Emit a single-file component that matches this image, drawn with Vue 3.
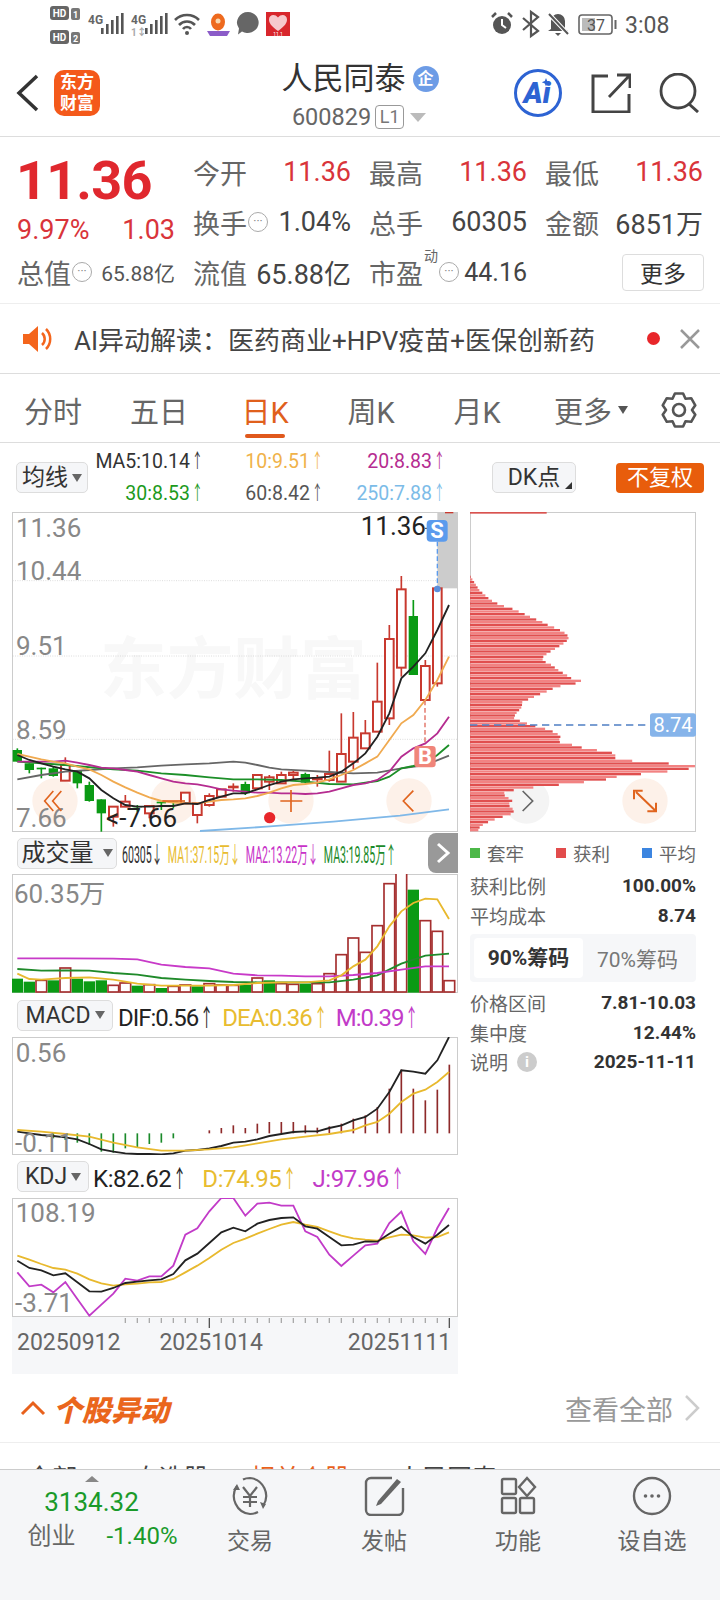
<template>
  <div class="page">
    <!-- status bar -->
    <svg class="status" viewBox="0 0 720 60">
      <g v-for="(n, i) in ['1', '2']" :key="n">
        <rect x="50" :y="6 + i * 24" width="19" height="14" rx="3" fill="#666" />
        <text x="59.5" :y="17 + i * 24" class="st-hd">HD</text>
        <rect x="71" :y="8 + i * 24" width="9" height="12" rx="2" fill="#777" />
        <text x="75.5" :y="18 + i * 24" class="st-n">{{ n }}</text>
      </g>
      <text x="88" y="24" class="st-g">4G</text>
      <rect v-for="b in sigA" :key="'a' + b.x" :x="b.x" :y="b.y" width="2.6" :height="b.h" fill="#555" />
      <text x="131" y="24" class="st-g">4G</text>
      <text x="131" y="36" class="st-g st-light">1↕</text>
      <rect v-for="b in sigB" :key="'b' + b.x" :x="b.x" :y="b.y" width="2.6" :height="b.h" fill="#555" />
      <g fill="none" stroke="#555" stroke-width="2.6">
        <path d="M175 20a17 17 0 0 1 24 0" />
        <path d="M179 25a11 11 0 0 1 16 0" />
        <path d="M183 29a5 5 0 0 1 8 0" />
      </g>
      <circle cx="187" cy="33" r="2" fill="#555" />
      <ellipse cx="218" cy="22" rx="7" ry="8.5" fill="#ee6a1e" />
      <circle cx="218" cy="21" r="2.5" fill="#f8d8b0" />
      <path d="M207 31h23l-3 5h-17z" fill="#8b5cc8" />
      <path d="M248 12a11 10.5 0 1 1-6 19.5l-4 3 1-6a11 10.5 0 0 1 9-16.500z" fill="#666" />
      <rect x="266" y="12" width="24" height="24" fill="#d8262c" />
      <path d="M278 31c-7-5-9-8-9-11.500 0-5 6-6 9-2 3-4 9-3 9 2 0 3.500-2 6.500-9 11.500z" fill="#f6c8cc" />
      <text x="278" y="35.500" class="st-tiny">11.1</text>

      <circle cx="502" cy="25" r="9" fill="#555" />
      <path d="M502 19v6l4 3" fill="none" stroke="#fff" stroke-width="2" />
      <path d="M492 17l4-4M512 17l-4-4" stroke="#555" stroke-width="2.500" />
      <path d="M523 18l15 13-7 5V12l7 5-15 13" fill="none" stroke="#555" stroke-width="2.200" />
      <path d="M558 14a7 7 0 0 1 7 7v8l3 2h-20l3-2v-8a7 7 0 0 1 7-7z" fill="#555" />
      <path d="M555 33h6l-3 3z" fill="#555" />
      <path d="M549 14l19 20" stroke="#fff" stroke-width="4" />
      <path d="M549 14l19 20" stroke="#555" stroke-width="2" />
      <rect x="579" y="15" width="33" height="19" rx="3" fill="none" stroke="#666" stroke-width="1.600" />
      <rect x="582" y="18" width="13" height="13" fill="#bbb" />
      <text x="596" y="31" class="st-bat">37</text>
      <rect x="614.500" y="20" width="2" height="9" fill="#666" />
      <text x="625" y="33" class="st-time">3:08</text>
    </svg>

    <!-- header -->
    <header class="head">
      <div class="head-left">
        <svg class="back" width="24" height="40" viewBox="0 0 24 40">
          <polyline points="21,3 3,20 21,37" fill="none" stroke="#333" stroke-width="3.500" />
        </svg>
        <div class="logo">东方<br />财富</div>
      </div>
      <div class="head-mid">
        <div class="head-title">人民同泰<span class="qi">企</span></div>
        <div class="head-code">
          600829<span class="l1">L1</span><i class="tri"></i>
        </div>
      </div>
      <div class="head-right">
        <svg width="50" height="50" viewBox="0 0 50 50">
          <circle cx="25" cy="25" r="22.500" fill="none" stroke="#2d63d3" stroke-width="3" />
          <text x="24" y="35" class="ai">Ai</text>
          <path d="M33 10l1.200 3 3 1.200-3 1.200-1.200 3-1.200-3-3-1.200 3-1.200z" fill="#2d63d3" />
        </svg>
        <svg width="40" height="40" viewBox="0 0 40 40">
          <path d="M17 3H2v36h36V21" fill="none" stroke="#444" stroke-width="3" />
          <path d="M18 24L38 3M26 2h13v13" fill="none" stroke="#444" stroke-width="2.800" />
        </svg>
        <svg width="42" height="40" viewBox="0 0 42 40">
          <circle cx="19" cy="18" r="17" fill="none" stroke="#444" stroke-width="2.800" />
          <path d="M30 31l9 8" stroke="#444" stroke-width="3" />
        </svg>
      </div>
    </header>

    <!-- quote -->
    <section class="quote">
      <div class="q-left">
        <div class="q-price">11.36</div>
        <div class="q-sub"><span>9.97%</span><span>1.03</span></div>
        <div class="q-total">
          <span class="q-lbl">总值</span><i class="dots">···</i><span class="q-small">65.88亿</span>
        </div>
      </div>
      <div class="q-grid">
        <div class="q-cell"><span class="q-lbl">今开</span><b class="up">11.36</b></div>
        <div class="q-cell"><span class="q-lbl">最高</span><b class="up">11.36</b></div>
        <div class="q-cell"><span class="q-lbl">最低</span><b class="up">11.36</b></div>
        <div class="q-cell">
          <span class="q-pair"><span class="q-lbl">换手</span><i class="dots">···</i></span><b>1.04%</b>
        </div>
        <div class="q-cell"><span class="q-lbl">总手</span><b>60305</b></div>
        <div class="q-cell"><span class="q-lbl">金额</span><b>6851万</b></div>
        <div class="q-cell"><span class="q-lbl">流值</span><b>65.88亿</b></div>
        <div class="q-cell q-pe">
          <span class="q-lbl">市盈</span><sup>动</sup><i class="dots">···</i><b>44.16</b>
        </div>
        <div class="q-cell q-end"><button class="more">更多</button></div>
      </div>
    </section>

    <!-- AI ticker -->
    <section class="ticker">
      <svg width="32" height="28" viewBox="0 0 32 28">
        <path d="M2 9h6l9-8v26l-9-8H2z" fill="#f4651c" />
        <path d="M21 8a8 8 0 0 1 0 12M25 4a14 14 0 0 1 0 20" fill="none" stroke="#f4651c" stroke-width="2.500" />
      </svg>
      <span class="ticker-text">AI异动解读：医药商业+HPV疫苗+医保创新药</span>
      <i class="ticker-dot"></i>
      <svg width="22" height="22" viewBox="0 0 22 22">
        <path d="M2 2l18 18M20 2L2 20" stroke="#999" stroke-width="2.500" />
      </svg>
    </section>

    <!-- period tabs -->
    <nav class="tabs">
      <span v-for="t in tabs" :key="t" class="tab" :class="{ 'tab-on': t === '日K' }">
        {{ t }}<i v-if="t === '更多'" class="tab-tri"></i>
      </span>
      <span class="tab">
        <svg width="38" height="38" viewBox="-19 -19 38 38">
          <polygon :points="gear" fill="none" stroke="#555" stroke-width="2.600" stroke-linejoin="round" />
          <circle r="6" fill="none" stroke="#555" stroke-width="2.600" />
        </svg>
      </span>
    </nav>

    <main class="charts">
      <div class="col-left">
        <div class="bar-ma">
          <button class="sel">均线<i class="sel-tri"></i></button>
          <div class="ma-grid">
            <span v-for="m in maText" :key="m.t" :style="{ color: m.c }">{{ m.t }}<i class="arr">↑</i></span>
          </div>
        </div>

        <!-- k chart -->
        <svg class="chart-main" width="446" height="320" viewBox="36 36 1338 960">
          <rect x="37.500" y="37.500" width="1335" height="957" fill="#fff" stroke="#ccc" stroke-width="3" />
          <text x="700" y="580" class="wm">东方财富</text>
          <line v-for="y in [242, 468, 718]" :key="y" x1="38" x2="1372" :y1="y" :y2="y" class="dotted" />
          <rect x="1312" y="38" width="60" height="227" fill="#ccc" />
          <line x1="1335" x2="1360" y1="38" y2="38" stroke="#c8392f" stroke-width="4" />
          <circle v-for="c in [165, 520, 873, 1227]" :key="c" :cx="c" cy="903" r="68" fill="#fdf1e9" />
          <g v-for="(c, i) in candles" :key="i">
            <line :x1="cx(i)" :x2="cx(i)" :y1="c[1]" :y2="c[2]" :stroke="c[0] ? RED : GREEN" stroke-width="5" />
            <rect v-if="c[0]" :x="cx(i) - 13" :y="c[3]" width="26" :height="c[4] - c[3]" fill="#fff" :stroke="RED" stroke-width="6" />
            <rect v-else :x="cx(i) - 14" :y="c[3]" width="28" :height="c[4] - c[3]" :fill="GREEN" />
          </g>
          <polyline v-for="l in mainLines" :key="l.c" :points="l.p" fill="none" :stroke="l.c" stroke-width="5.500" />
          <text x="48" y="112" class="ax">11.36</text>
          <text x="48" y="241" class="ax">10.44</text>
          <text x="48" y="466" class="ax">9.51</text>
          <text x="48" y="716" class="ax">8.59</text>
          <text x="48" y="982" class="ax">7.66</text>
          <text x="1082" y="106" class="hi">11.36</text>
          <text x="318" y="981" class="hi">&lt;-7.66</text>
          <line x1="1275" x2="1290" y1="85" y2="85" stroke="#333" stroke-width="3" />
          <line x1="1312" x2="1312" y1="125" y2="262" stroke="#5b9bed" stroke-width="4" stroke-dasharray="14 8" />
          <circle cx="1312" cy="267" r="10" fill="#5b8fdc" />
          <rect x="1280" y="60" width="63" height="65" rx="12" fill="#5b9bed" />
          <text x="1311" y="113" class="badge">S</text>
          <line x1="1275" x2="1275" y1="602" y2="735" stroke="#e06a5c" stroke-width="4" stroke-dasharray="14 8" />
          <rect x="1243" y="738" width="64" height="64" rx="10" fill="#f0857a" />
          <text x="1275" y="792" class="badge">B</text>
          <g fill="none" stroke="#e0641e" stroke-width="5">
            <path d="M160 873l-26 30 26 30M184 873l-26 30 26 30" />
            <path d="M487 903h68" />
            <path d="M841 903h66M873 870v66" />
            <path d="M1240 872l-30 31 30 31" />
          </g>
          <circle cx="809" cy="953" r="17" fill="#e8262a" />
        </svg>

        <!-- volume -->
        <div class="bar-sub bar-vol">
          <button class="sel sel-wide">成交量<i class="sel-tri"></i></button>
          <div class="vol-legend">
            <div class="vol-legend-in">
              <span class="c-dark">60305↓</span>
              <span class="c-yellow">MA1:37.15万↓</span>
              <span class="c-pink">MA2:13.22万↓</span>
              <span class="c-green">MA3:19.85万↑</span>
            </div>
          </div>
          <div class="next">
            <svg width="16" height="22" viewBox="0 0 16 22">
              <polyline points="3,2 13,11 3,20" fill="none" stroke="#fff" stroke-width="3" />
            </svg>
          </div>
        </div>
        <svg class="chart" width="446" height="119" viewBox="36 133 1338 357">
          <rect x="37.500" y="134.500" width="1335" height="354" fill="#fff" stroke="#ccc" stroke-width="3" />
          <g v-for="(v, i) in volumes" :key="i">
            <rect v-if="v[0]" :x="cx(i) - 16" :y="v[1]" width="32" :height="487 - v[1]" fill="#fff" stroke="#a52f2f" stroke-width="5" />
            <rect v-else :x="cx(i) - 17" :y="v[1]" width="34" :height="489 - v[1]" fill="#0a9a14" />
          </g>
          <polyline v-for="l in volLines" :key="l.c" :points="l.p" fill="none" :stroke="l.c" stroke-width="5.500" />
          <text x="42" y="220" class="ax">60.35万</text>
        </svg>

        <!-- macd -->
        <div class="bar-sub">
          <button class="sel sel-macd">MACD<i class="sel-tri"></i></button>
          <span class="idx c-black">DIF:0.56<i class="arr">↑</i></span>
          <span class="idx c-yellow">DEA:0.36<i class="arr">↑</i></span>
          <span class="idx c-violet">M:0.39<i class="arr">↑</i></span>
        </div>
        <svg class="chart" width="446" height="118" viewBox="36 0 1338 354">
          <rect x="37.500" y="1.500" width="1335" height="351" fill="#fff" stroke="#ccc" stroke-width="3" />
          <line v-for="b in macdBars" :key="b.x" :x1="b.x" :x2="b.x" :y1="b.y" y2="289" :stroke="b.up ? '#8e2a2a' : '#1a8a2a'" stroke-width="5" />
          <polyline :points="macdDif" fill="none" stroke="#222" stroke-width="5.500" />
          <polyline :points="macdDea" fill="none" stroke="#e8b92e" stroke-width="5.500" />
          <text x="47" y="76" class="ax">0.56</text>
          <text x="45" y="344" class="ax">-0.11</text>
        </svg>

        <!-- kdj -->
        <div class="bar-sub bar-kdj">
          <button class="sel sel-kdj">KDJ<i class="sel-tri"></i></button>
          <span class="idx idx-kdj c-black">K:82.62<i class="arr">↑</i></span>
          <span class="idx idx-kdj c-yellow">D:74.95<i class="arr">↑</i></span>
          <span class="idx idx-kdj c-violet">J:97.96<i class="arr">↑</i></span>
        </div>
        <svg class="chart" width="446" height="119" viewBox="36 205 1338 357">
          <rect x="37.500" y="206.500" width="1335" height="354" fill="#fff" stroke="#ccc" stroke-width="3" />
          <polyline :points="kdjJ" fill="none" stroke="#c23bc8" stroke-width="5.500" />
          <polyline :points="kdjD" fill="none" stroke="#e8b92e" stroke-width="5.500" />
          <polyline :points="kdjK" fill="none" stroke="#222" stroke-width="5.500" />
          <text x="47" y="278" class="ax">108.19</text>
          <text x="45" y="548" class="ax">-3.71</text>
        </svg>

        <div class="dates">
          <svg width="446" height="12" viewBox="36 0 1338 36">
            <line v-for="k in ticks" :key="k" :x1="cx(k)" :x2="cx(k)" y1="3" :y2="k === 16 || k === 36 ? 33 : 18" :stroke="k === 16 || k === 36 ? '#555' : '#aaa'" stroke-width="4" />
          </svg>
          <div class="date-row">
            <span>20250912</span><span>20251014</span><span>20251111</span>
          </div>
        </div>
      </div>

      <div class="col-right">
        <div class="bar-chip">
          <button class="sel sel-dk">DK点<i class="corner"></i></button>
          <button class="fq">不复权</button>
        </div>
        <svg class="chart-main" width="226" height="320" viewBox="30 36 678 960">
          <rect x="31.500" y="37.500" width="675" height="957" fill="#fff" stroke="#ccc" stroke-width="3" />
          <circle cx="200" cy="903" r="68" fill="#f4f4f4" />
          <circle cx="555" cy="903" r="68" fill="#fdf1e9" />
          <rect x="30" y="36" width="230" height="5" fill="#d9534f" />
          <rect v-for="b in chipBars" :key="b.y" x="30" :y="b.y" :width="b.w" height="7" :fill="b.c" />
          <line x1="30" x2="572" y1="675" y2="675" stroke="#4f7fc4" stroke-width="5" stroke-dasharray="22 14" />
          <rect x="570" y="640" width="138" height="70" rx="8" fill="#86b4ea" />
          <text x="639" y="696" class="chip-lbl">8.74</text>
          <polyline points="188,873 218,903 188,933" fill="none" stroke="#666" stroke-width="5" />
          <path d="M528 876l60 58M522 898v-26h26M588 908v26h-26" fill="none" stroke="#e0641e" stroke-width="6" />
        </svg>

        <div class="legend">
          <span><i style="background: #4cb848"></i>套牢</span>
          <span><i style="background: #e24c4c"></i>获利</span>
          <span><i style="background: #3c85e0"></i>平均</span>
        </div>
        <div class="kv kv-first"><span>获利比例</span><b>100.00%</b></div>
        <div class="kv"><span>平均成本</span><b>8.74</b></div>
        <div class="chip-tabs">
          <span class="chip-on">90%筹码</span><span>70%筹码</span>
        </div>
        <div class="kv"><span>价格区间</span><b>7.81-10.03</b></div>
        <div class="kv"><span>集中度</span><b>12.44%</b></div>
        <div class="kv">
          <span class="kv-info">说明<i class="info">i</i></span><b>2025-11-11</b>
        </div>
      </div>
    </main>

    <!-- movers section, the row under it is cut off by the bottom bar -->
    <section class="movers">
      <svg width="26" height="16" viewBox="0 0 26 16">
        <polyline points="2,14 13,3 24,14" fill="none" stroke="#e8611c" stroke-width="3" />
      </svg>
      <h2 class="movers-title">个股异动</h2>
      <span class="movers-all">查看全部</span>
      <svg width="16" height="28" viewBox="0 0 16 28">
        <polyline points="2,2 14,14 2,26" fill="none" stroke="#ccc" stroke-width="2.500" />
      </svg>
    </section>
    <div class="filter">
      <span>全部</span><span>自选股</span><span class="filter-on">相关个股</span><span>人民同泰</span>
    </div>

    <footer class="foot">
      <div class="foot-idx">
        <i class="foot-tri"></i>
        <div class="foot-val">3134.32</div>
        <div class="foot-row"><span>创业</span><b>-1.40%</b></div>
      </div>
      <div class="foot-item">
        <svg width="44" height="40" viewBox="0 0 44 40">
          <path d="M9 10a18 18 0 0 0 13 28c3 0 6-1 8-2M35 30a18 18 0 0 0-13-28c-3 0-5 .5-7 1.500" fill="none" stroke="#666" stroke-width="2.200" />
          <path d="M5 14l4-6 3 6zM32 26l6 2-3 5z" fill="#666" />
          <path d="M15 11l7 9 7-9M22 20v11M15 21h14M15 26h14" fill="none" stroke="#666" stroke-width="2.200" />
        </svg>
        <span>交易</span>
      </div>
      <div class="foot-item">
        <svg width="44" height="40" viewBox="0 0 44 40">
          <path d="M30 2H9a5 5 0 0 0-5 5v27a5 5 0 0 0 5 5h27a5 5 0 0 0 5-5V12" fill="none" stroke="#666" stroke-width="2.400" />
          <path d="M16 25L35 3l4 3-20 22-5 2z" fill="#666" />
        </svg>
        <span>发帖</span>
      </div>
      <div class="foot-item">
        <svg width="44" height="40" viewBox="0 0 44 40">
          <g fill="none" stroke="#666" stroke-width="2.400">
            <rect x="6" y="3" width="14" height="15" rx="1.500" />
            <rect x="6" y="22" width="14" height="15" rx="1.500" />
            <rect x="24" y="22" width="14" height="15" rx="1.500" />
            <path d="M31 2l8 9-8 9-8-9z" />
          </g>
        </svg>
        <span>功能</span>
      </div>
      <div class="foot-item">
        <svg width="44" height="40" viewBox="0 0 44 40">
          <circle cx="22" cy="20" r="18" fill="none" stroke="#666" stroke-width="2.400" />
          <circle cx="15.500" cy="20" r="1.800" fill="#666" />
          <circle cx="22" cy="20" r="1.800" fill="#666" />
          <circle cx="28.500" cy="20" r="1.800" fill="#666" />
        </svg>
        <span>设自选</span>
      </div>
    </footer>
  </div>
</template>

<script setup>
const RED = '#c8392f'
const GREEN = '#0a9a14'

const cx = (i) => 52 + 36 * i

// a line with one y per candle
const series = (ys) => ys.map((y, i) => `${cx(i)},${y}`).join(' ')
const path = (pts) => pts.map((p) => p.join(',')).join(' ')

const sigA = [[101, 28, 6], [106, 24, 10], [111, 20, 14], [116, 16, 18], [121, 13, 21]].map(([x, y, h]) => ({ x, y, h }))
const sigB = [[145, 28, 6], [150, 24, 10], [155, 20, 14], [160, 16, 18], [165, 13, 21]].map(([x, y, h]) => ({ x, y, h }))

const tabs = ['分时', '五日', '日K', '周K', '月K', '更多']

// six lobe gear outline
const gear = Array.from({ length: 6 }, (_, i) => {
  const a = (i * 60 * Math.PI) / 180
  return [[-30, 13], [-14, 17], [14, 17], [30, 13]]
    .map(([d, r]) => {
      const t = a + (d * Math.PI) / 180
      return `${(r * Math.sin(t)).toFixed(1)},${(-r * Math.cos(t)).toFixed(1)}`
    })
    .join(' ')
}).join(' ')

const maText = [
  { t: 'MA5:10.14', c: '#333' },
  { t: '10:9.51', c: '#f0b24a' },
  { t: '20:8.83', c: '#b52c90' },
  { t: '30:8.53', c: '#1c9a1c' },
  { t: '60:8.42', c: '#555' },
  { t: '250:7.88', c: '#7cbce8' }
]

// up, wick top, wick bottom, body top, body bottom
const candles = [
  [0, 745, 785, 750, 785], [0, 790, 820, 790, 810], [0, 803, 835, 803, 808], [0, 800, 830, 805, 828],
  [1, 772, 842, 795, 842], [0, 810, 865, 810, 850], [0, 845, 905, 855, 903], [0, 898, 995, 898, 940],
  [1, 920, 980, 920, 950], [1, 885, 920, 905, 920], [0, 915, 935, 918, 922], [1, 915, 955, 918, 940],
  [0, 905, 930, 905, 910], [0, 905, 925, 905, 908], [1, 878, 910, 878, 910], [1, 910, 970, 910, 945],
  [1, 880, 920, 888, 915], [1, 868, 890, 868, 890], [1, 850, 875, 860, 862], [0, 845, 885, 852, 880],
  [1, 825, 865, 825, 865], [1, 825, 870, 832, 845], [1, 815, 850, 825, 850], [1, 812, 840, 818, 825],
  [0, 818, 850, 822, 848], [1, 825, 860, 835, 838], [1, 752, 845, 822, 840], [1, 640, 845, 762, 845],
  [1, 636, 808, 713, 785], [1, 660, 745, 700, 745], [1, 488, 695, 605, 695], [1, 375, 675, 417, 655],
  [1, 228, 530, 268, 503], [0, 300, 525, 348, 525], [1, 480, 600, 498, 600], [1, 265, 560, 265, 550]
]

const mainLines = [
  { c: '#7fb8e8', p: path([[600, 993], [800, 980], [1000, 965], [1200, 947], [1347, 928]]) },
  { c: '#666', p: path([[52, 838], [124, 825], [196, 815], [268, 810], [340, 805], [412, 802], [484, 797], [556, 793], [628, 790], [700, 785], [736, 788], [772, 795], [808, 803], [844, 808], [916, 812], [988, 816], [1060, 820], [1132, 818], [1204, 805], [1276, 795], [1347, 767]]) },
  { c: '#1c8f28', p: path([[52, 785], [196, 795], [340, 808], [412, 812], [484, 820], [556, 825], [628, 832], [700, 838], [772, 838], [844, 840], [916, 845], [988, 852], [1060, 853], [1132, 843], [1168, 830], [1204, 805], [1240, 798], [1276, 790], [1312, 765], [1347, 735]]) },
  { c: '#b52c90', p: series([785, 785, 785, 785, 782, 788, 795, 803, 805, 810, 815, 825, 835, 845, 850, 853, 860, 868, 872, 875, 878, 878, 880, 880, 882, 880, 875, 865, 855, 850, 840, 815, 770, 745, 730, 700]) + ' 1347,650' },
  { c: '#f0aa50', p: series([762, 770, 778, 785, 790, 800, 808, 825, 845, 862, 878, 892, 903, 908, 910, 910, 905, 900, 898, 895, 888, 878, 865, 855, 852, 848, 838, 825, 810, 790, 770, 720, 670, 645, 600, 540]) + ' 1347,470' },
  { c: '#222', p: series([765, 780, 790, 800, 808, 815, 835, 870, 895, 915, 920, 920, 918, 918, 910, 912, 900, 890, 880, 880, 868, 855, 845, 838, 835, 833, 830, 815, 790, 760, 710, 640, 535, 500, 460, 390]) + ' 1347,315' }
]

// up, bar top
const volumes = [
  [0, 447], [0, 456], [1, 452], [0, 452], [1, 415], [0, 447], [0, 455], [0, 452], [1, 467], [1, 460],
  [0, 468], [1, 465], [0, 475], [1, 470], [1, 466], [0, 470], [1, 462], [1, 466], [1, 467], [0, 465],
  [1, 445], [0, 452], [1, 462], [1, 464], [0, 462], [1, 462], [1, 432], [1, 375], [1, 325], [1, 368],
  [1, 288], [1, 162], [1, 125], [0, 180], [1, 273], [1, 305], [1, 453]
]

const volLines = [
  { c: '#1f8a2a', p: path([[52, 418], [124, 423], [196, 422], [268, 423], [340, 430], [412, 435], [484, 445], [556, 450], [628, 454], [700, 457], [772, 458], [844, 458], [916, 458], [988, 458], [1060, 450], [1132, 437], [1204, 402], [1276, 378], [1347, 372]]) },
  { c: '#c83ac8', p: path([[52, 386], [196, 386], [340, 387], [412, 389], [484, 405], [556, 412], [628, 416], [700, 432], [772, 437], [844, 438], [916, 440], [988, 440], [1060, 436], [1132, 430], [1204, 420], [1276, 410], [1347, 410]]) },
  { c: '#e8b92e', p: path([[52, 432], [88, 448], [124, 450], [196, 445], [268, 443], [340, 450], [412, 462], [484, 468], [556, 468], [628, 468], [700, 466], [772, 460], [844, 458], [916, 458], [988, 452], [1024, 437], [1060, 410], [1096, 390], [1132, 350], [1168, 290], [1204, 245], [1240, 220], [1276, 207], [1312, 209], [1347, 268]]) }
]

const macdBars = [
  ...[[3, 304], [4, 309], [5, 317], [6, 324], [7, 344], [8, 347], [9, 334], [10, 331], [11, 321], [12, 317], [13, 304]].map(([k, y]) => ({ x: cx(k), y, up: false })),
  ...[[16, 280], [17, 273], [18, 265], [19, 273], [20, 260], [21, 255], [22, 255], [23, 255], [24, 265], [25, 272], [26, 268], [27, 260], [28, 245], [29, 235], [30, 210], [31, 155], [32, 98], [33, 155], [34, 190], [35, 158], [36, 83]].map(([k, y]) => ({ x: cx(k), y, up: true }))
]

const macdDif = path([
  ...[[52, 5], [88, 10], [124, 15], [160, 18], [196, 22], [232, 28], [268, 42], [304, 58], [340, 65], [376, 70], [412, 72], [448, 72], [484, 73], [520, 70], [556, 62], [592, 60], [628, 55], [664, 48], [700, 38], [736, 35], [772, 28], [808, 18], [844, 12], [880, 6], [916, 4], [952, 4]].map(([x, y]) => [x, y + 279]),
  ...[[988, 893], [1025, 885], [1060, 870], [1096, 860], [1132, 835], [1168, 785], [1204, 720], [1240, 724], [1276, 730], [1312, 690], [1347, 620]].map(([x, y]) => [x, y - 620])
])
const macdDea = path([
  ...[[52, 0], [124, 5], [196, 12], [268, 20], [340, 38], [412, 52], [484, 62], [556, 62], [628, 58], [700, 52], [772, 40], [844, 28], [916, 20], [988, 12], [1060, 0]].map(([x, y]) => [x, y + 279]),
  ...[[1096, 885], [1132, 875], [1168, 850], [1204, 815], [1240, 790], [1276, 778], [1312, 755], [1347, 725]].map(([x, y]) => [x, y - 620])
])

const kdjK = series([393, 415, 422, 437, 431, 458, 485, 486, 475, 460, 456, 452, 449, 433, 392, 372, 340, 308, 294, 305, 282, 271, 265, 263, 290, 297, 322, 347, 345, 335, 336, 312, 291, 322, 342, 315]) + ' 1347,286'
const kdjD = series([378, 390, 403, 415, 420, 432, 449, 461, 468, 464, 462, 458, 457, 448, 428, 408, 385, 360, 340, 327, 312, 298, 285, 277, 285, 292, 305, 318, 326, 330, 333, 323, 315, 317, 324, 322]) + ' 1347,308'
const kdjJ = series([428, 470, 465, 488, 457, 508, 558, 525, 492, 447, 453, 440, 440, 408, 315, 296, 245, 205, 205, 258, 222, 219, 228, 228, 305, 322, 375, 409, 378, 347, 342, 280, 246, 335, 373, 295]) + ' 1347,235'

const ticks = Array.from({ length: 28 }, (_, i) => i + 9)

// outline of the chip profile: y, right edge
const chipEdge = [
  [230, 32], [250, 45], [270, 58], [285, 75], [300, 92], [315, 122], [325, 155], [340, 190], [350, 210], [365, 245],
  [375, 265], [385, 290], [395, 310], [405, 322], [415, 326], [425, 318], [440, 295], [455, 270], [465, 255], [475, 245],
  [485, 255], [495, 275], [510, 295], [525, 320], [535, 335], [545, 375], [560, 290], [570, 270], [580, 245], [590, 222],
  [600, 200], [605, 187], [615, 186], [625, 183], [635, 172], [645, 165], [655, 162], [665, 187], [675, 215], [690, 270],
  [700, 290], [708, 302], [718, 298], [728, 300], [735, 342], [745, 375], [752, 425], [760, 466], [770, 466], [778, 466],
  [787, 580], [795, 703], [803, 708], [812, 642], [822, 543], [830, 470], [840, 430], [850, 333], [858, 260], [866, 180],
  [876, 133], [885, 133], [895, 147], [903, 158], [912, 145], [920, 150], [930, 163], [940, 158], [950, 128], [960, 98],
  [970, 75], [978, 62], [987, 55], [993, 55]
]

// one bar every 8 units, right edge read off the outline
const edgeAt = (y) => {
  const j = chipEdge.findIndex((p) => p[0] >= y)
  if (j <= 0) return chipEdge[0][1]
  const [y0, r0] = chipEdge[j - 1]
  const [y1, r1] = chipEdge[j]
  return r0 + ((r1 - r0) * (y - y0)) / (y1 - y0)
}
const chipBars = []
for (let y = 230, i = 0; y < 993; y += 8, i++) {
  chipBars.push({ y: y - 3, w: edgeAt(y) - 30, c: i % 2 ? '#f28282' : '#e04f4f' })
}
</script>

<style>
html,
body {
  margin: 0;
  background: #fff;
}
</style>

<style scoped>
.page {
  width: 720px;
  height: 1600px;
  overflow: hidden;
  display: flex;
  flex-direction: column;
  background: #fff;
  color: #333;
  font-family: Roboto, "Noto Sans CJK SC", sans-serif;
}

button {
  font-family: inherit;
  padding: 0;
  margin: 0;
}

i {
  font-style: normal;
}

.status {
  display: block;
  flex: none;
  width: 720px;
  height: 60px;
}

.st-hd {
  font-size: 10px;
  font-weight: 700;
  fill: #fff;
  text-anchor: middle;
}

.st-n {
  font-size: 9px;
  font-weight: 700;
  fill: #fff;
  text-anchor: middle;
}

.st-g {
  font-size: 12px;
  font-weight: 700;
  fill: #666;
}

.st-light {
  fill: #aaa;
  font-size: 10px;
}

.st-tiny {
  font-size: 5px;
  fill: #fff;
  text-anchor: middle;
}

.st-bat {
  font-size: 16px;
  fill: #555;
  text-anchor: middle;
}

.st-time {
  font-size: 23px;
  fill: #555;
}

/* header */
.head {
  flex: none;
  height: 77px;
  box-sizing: border-box;
  border-bottom: 1px solid #ddd;
  display: grid;
  grid-template-columns: 1fr auto 1fr;
  align-items: start;
}

.head-left {
  display: flex;
  align-items: center;
  padding: 10px 0 0 16px;
  gap: 14px;
}

.logo {
  width: 46px;
  height: 46px;
  border-radius: 10px;
  background: #f4591a;
  color: #fff;
  font-size: 17px;
  font-weight: 700;
  line-height: 21px;
  text-align: center;
  padding-top: 2px;
  box-sizing: border-box;
}

.head-mid {
  text-align: center;
}

.head-title {
  display: flex;
  align-items: center;
  font-size: 31px;
  line-height: 36px;
  color: #333;
  margin-top: 1px;
}

.qi {
  width: 26px;
  height: 26px;
  margin-left: 7px;
  border-radius: 50%;
  background: #6d9ce6;
  color: #fff;
  font-size: 16px;
  font-weight: 700;
  line-height: 26px;
}

.head-code {
  display: flex;
  align-items: center;
  justify-content: center;
  margin-top: 5px;
  font-size: 23.5px;
  line-height: 30px;
  color: #666;
  margin-left: -2px;
}

.l1 {
  width: 27px;
  height: 22px;
  margin-left: 4px;
  border: 1px solid #999;
  border-radius: 4px;
  font-size: 18px;
  line-height: 22px;
  color: #777;
}

.tri {
  margin-left: 6px;
  border: 8px solid transparent;
  border-top: 9px solid #bbb;
  border-bottom: 0;
}

.head-right {
  display: flex;
  justify-content: flex-end;
  align-items: center;
  gap: 28px;
  padding: 8px 19px 0 0;
}

/* quote block */
.quote {
  flex: none;
  height: 167px;
  box-sizing: border-box;
  padding: 10px 16px 0 17px;
  border-bottom: 1px solid #eee;
  display: flex;
  color: #666;
}

.q-left {
  width: 176px;
  flex: none;
  padding-right: 18px;
  box-sizing: border-box;
}

.q-price {
  height: 62px;
  font-size: 54px;
  font-weight: 700;
  line-height: 68px;
  color: #e0282e;
  letter-spacing: -0.8px;
  margin-left: -1px;
}

.q-sub {
  height: 38px;
  line-height: 42px;
  display: flex;
  justify-content: space-between;
  font-size: 27px;
  color: #d9343a;
}

.q-total {
  height: 50px;
  display: flex;
  align-items: center;
  white-space: nowrap;
}

.q-small {
  font-size: 21px;
  color: #555;
  margin-left: auto;
}

.q-lbl {
  font-size: 27px;
  color: #666;
}

.q-grid {
  flex: 1;
  display: grid;
  grid-template-columns: repeat(3, 158px);
  grid-auto-rows: 50px;
  column-gap: 18px;
}

.q-cell {
  display: flex;
  align-items: center;
  justify-content: space-between;
  white-space: nowrap;
}

.q-cell b {
  font-weight: 400;
  font-size: 27px;
  color: #444;
}

.q-cell b.up {
  color: #d9343a;
}

.q-pair {
  display: flex;
  align-items: center;
}

.dots {
  width: 20px;
  height: 20px;
  margin-left: 1px;
  box-sizing: border-box;
  border: 1.5px solid #aaa;
  border-radius: 50%;
  font-size: 12px;
  line-height: 16px;
  text-align: center;
  color: #888;
  flex: none;
  overflow: hidden;
}

.q-pe {
  justify-content: flex-start;
  position: relative;
}

.q-pe sup {
  font-size: 14px;
  color: #666;
  align-self: flex-start;
  line-height: 14px;
  margin-top: 2px;
  margin-left: 1px;
}

.q-pe b {
  margin-left: auto;
  font-size: 25px;
}

.q-end {
  justify-content: flex-end;
}

.more {
  width: 82px;
  height: 37px;
  background: #fff;
  border: 1px solid #ddd;
  border-radius: 4px;
  font-size: 23px;
  color: #333;
  margin-right: -1px;
}

/* ticker */
.ticker {
  flex: none;
  height: 70px;
  box-sizing: border-box;
  border-bottom: 1px solid #ddd;
  display: flex;
  align-items: center;
  padding-left: 21px;
  padding-right: 19px;
}

.ticker-text {
  margin-left: 21px;
  font-size: 26px;
  color: #444;
  white-space: nowrap;
}

.ticker-dot {
  width: 13px;
  height: 13px;
  border-radius: 50%;
  background: #e8262a;
  margin-left: auto;
  margin-right: 19px;
}

/* tabs */
.tabs {
  flex: none;
  height: 69px;
  box-sizing: border-box;
  border-bottom: 1px solid #ddd;
  display: grid;
  grid-template-columns: repeat(5, 106px) 122px 54px;
  align-items: center;
  font-size: 29px;
  color: #666;
}

.tab {
  position: relative;
  display: flex;
  align-items: center;
  justify-content: center;
  height: 100%;
  padding-top: 3px;
  box-sizing: border-box;
}

.tab-on {
  color: #e0601c;
}

.tab-on::after {
  content: "";
  position: absolute;
  left: 33px;
  width: 40px;
  bottom: 4px;
  height: 4px;
  border-radius: 2px;
  background: #e0581c;
}

.tab-tri {
  margin-left: 6px;
  border: 5px solid transparent;
  border-top: 8px solid #555;
  border-bottom: 0;
}

/* charts */
.charts {
  flex: none;
  display: grid;
  grid-template-columns: 446px 226px;
  gap: 12px;
  padding-left: 12px;
}

.col-left,
.col-right {
  min-width: 0;
}

.chart,
.chart-main {
  display: block;
}

.bar-ma {
  height: 69px;
  display: flex;
  align-items: center;
  margin-left: 4px;
}

.sel {
  flex: none;
  height: 31px;
  border: 1px solid #ddd;
  border-radius: 5px;
  background: #f5f6f8;
  color: #333;
  font-size: 23px;
  line-height: 29px;
  display: flex;
  align-items: center;
  justify-content: center;
  width: 72px;
}

.sel-tri {
  margin-left: 4px;
  border: 5px solid transparent;
  border-top: 8px solid #666;
  border-bottom: 0;
}

.sel-wide {
  width: 100px;
  font-size: 24px;
}

.sel-wide .sel-tri {
  margin-left: 9px;
}

.sel-macd {
  width: 96px;
  font-size: 23px;
}

.sel-kdj {
  width: 72px;
  font-size: 23px;
}

.ma-grid {
  width: 359px;
  display: grid;
  grid-template-columns: 117px 120px 122px;
  grid-auto-rows: 32px;
  font-size: 19.5px;
  line-height: 32px;
  text-align: right;
  white-space: nowrap;
}

/* narrow, tall arrow like the app's */
.arr {
  display: inline-block;
  width: 13px;
  margin-left: 2px;
  text-align: left;
  letter-spacing: 0;
  transform: scaleX(0.55);
  transform-origin: left center;
}

.bar-sub {
  height: 44px;
  display: flex;
  align-items: center;
  margin-left: 5px;
}

.bar-vol {
  height: 42px;
}

.bar-kdj {
  height: 43px;
}

.idx {
  font-size: 24px;
  letter-spacing: -1px;
  white-space: nowrap;
  margin-left: 5px;
}

.idx + .idx {
  margin-left: 9px;
}

.idx-kdj {
  letter-spacing: -0.4px;
  margin-left: 4px;
}

.idx-kdj + .idx-kdj {
  margin-left: 16px;
}

.c-dark {
  color: #333;
}

.c-black {
  color: #222;
}

.c-yellow {
  color: #e8bc30;
}

.c-pink {
  color: #c832c8;
}

.c-green {
  color: #1b8a2a;
}

.c-violet {
  color: #c23bc8;
}

.vol-legend {
  width: 273px;
  margin-left: 5px;
  flex: none;
}

.vol-legend-in {
  display: inline-flex;
  gap: 12px;
  font-size: 23px;
  white-space: nowrap;
  transform: scaleX(0.46);
  transform-origin: left center;
}

.next {
  margin-left: auto;
  width: 30px;
  height: 40px;
  background: #999;
  border-radius: 8px 0 0 8px;
  display: flex;
  align-items: center;
  justify-content: center;
}

.dates {
  height: 57px;
  background: #f6f7f9;
  font-size: 23px;
  color: #666;
}

.dates svg {
  display: block;
}

.date-row {
  display: flex;
  padding: 0 0 0 5px;
  line-height: 28px;
  margin-top: 0;
}

.date-row span:nth-child(2) {
  margin-left: 39px;
}

.date-row span:nth-child(3) {
  margin-left: 85px;
}

/* right column */
.bar-chip {
  height: 69px;
  display: flex;
  align-items: center;
  justify-content: space-between;
  margin-left: 22px;
  margin-right: -8px;
}

.sel-dk {
  width: 84px;
  height: 31px;
  position: relative;
  font-size: 23px;
}

.corner {
  position: absolute;
  right: 3px;
  bottom: 3px;
  border-left: 7px solid transparent;
  border-bottom: 7px solid #333;
}

.fq {
  width: 88px;
  height: 30px;
  border: 0;
  border-radius: 4px;
  background: #e85d0c;
  color: #fff;
  font-size: 22px;
  line-height: 28px;
}

.legend {
  display: flex;
  justify-content: space-between;
  height: 42px;
  align-items: center;
  font-size: 18.5px;
  color: #666;
}

.legend span {
  display: flex;
  align-items: center;
}

.legend i {
  width: 10px;
  height: 10px;
  margin-right: 7px;
}

.kv {
  display: flex;
  justify-content: space-between;
  align-items: center;
  height: 29.5px;
  font-size: 19px;
  color: #666;
}

.kv-first {
  margin-top: -3px;
}

.kv b {
  font-size: 19px;
  font-weight: 700;
  color: #333;
}

.kv-info {
  display: flex;
  align-items: center;
}

.info {
  width: 20px;
  height: 20px;
  margin-left: 9px;
  border-radius: 50%;
  background: #ccc;
  color: #fff;
  font-size: 15px;
  font-weight: 700;
  line-height: 20px;
  text-align: center;
}

.chip-tabs {
  height: 48px;
  margin: 4px 0 6px;
  background: #f6f7f9;
  border-radius: 4px;
  padding: 4px;
  box-sizing: border-box;
  display: grid;
  grid-template-columns: 109px 1fr;
  align-items: center;
  font-size: 21px;
  color: #777;
  text-align: center;
}

.chip-on {
  height: 40px;
  line-height: 40px;
  background: #fff;
  border-radius: 4px;
  font-weight: 700;
  color: #333;
}

/* movers */
.movers {
  flex: none;
  height: 69px;
  box-sizing: border-box;
  border-bottom: 1px solid #eee;
  display: flex;
  align-items: center;
  padding: 0 20px 0 20px;
}

.movers-title {
  margin: 0 0 0 7px;
  font-size: 29px;
  font-weight: 900;
  font-style: italic;
  color: #ea661c;
}

.movers-all {
  margin-left: auto;
  margin-right: 11px;
  font-size: 27px;
  color: #999;
}

.filter {
  flex: none;
  height: 26px;
  overflow: hidden;
  display: flex;
  padding: 21px 0 0 27px;
  box-sizing: border-box;
  font-size: 25px;
  line-height: 30px;
  color: #444;
}

.filter span:nth-child(2) {
  margin-left: 57px;
}

.filter span:nth-child(3) {
  margin-left: 41px;
}

.filter span:nth-child(4) {
  margin-left: 47px;
}

.filter-on {
  color: #e8611c;
}

/* bottom bar */
.foot {
  flex: 1;
  border-top: 1px solid #ccc;
  background: #f5f6f8;
  display: grid;
  grid-template-columns: 183px repeat(4, 134px);
  align-items: start;
}

.foot-idx {
  display: flex;
  flex-direction: column;
  align-items: center;
  padding-top: 6px;
}

.foot-tri {
  border: 7px solid transparent;
  border-bottom: 6px solid #888;
  border-top: 0;
}

.foot-val {
  font-size: 26px;
  line-height: 30px;
  margin-top: 5px;
  color: #1a9a2a;
}

.foot-row {
  display: flex;
  justify-content: space-between;
  width: 150px;
  margin-top: 2px;
  margin-left: 22px;
  font-size: 24px;
  line-height: 34px;
  color: #666;
}

.foot-row b {
  font-weight: 400;
  color: #1a9a2a;
}

.foot-item {
  display: flex;
  flex-direction: column;
  align-items: center;
  padding-top: 6px;
  font-size: 23px;
  color: #666;
}

.foot-item span {
  margin-top: 10px;
  line-height: 32px;
}

/* svg texts */
.ai {
  font-size: 29px;
  font-weight: 900;
  font-style: italic;
  fill: #2d63d3;
  text-anchor: middle;
}

.wm {
  font-size: 200px;
  font-weight: 700;
  fill: #f8f8f8;
  text-anchor: middle;
}

.dotted {
  stroke: #ccc;
  stroke-width: 2;
  stroke-dasharray: 3 4;
}

.ax {
  font-size: 78px;
  fill: #888;
}

.hi {
  font-size: 78px;
  fill: #222;
}

.badge {
  font-size: 66px;
  font-weight: 700;
  fill: #fff;
  text-anchor: middle;
}

.chip-lbl {
  font-size: 60px;
  fill: #fff;
  text-anchor: middle;
}
</style>
